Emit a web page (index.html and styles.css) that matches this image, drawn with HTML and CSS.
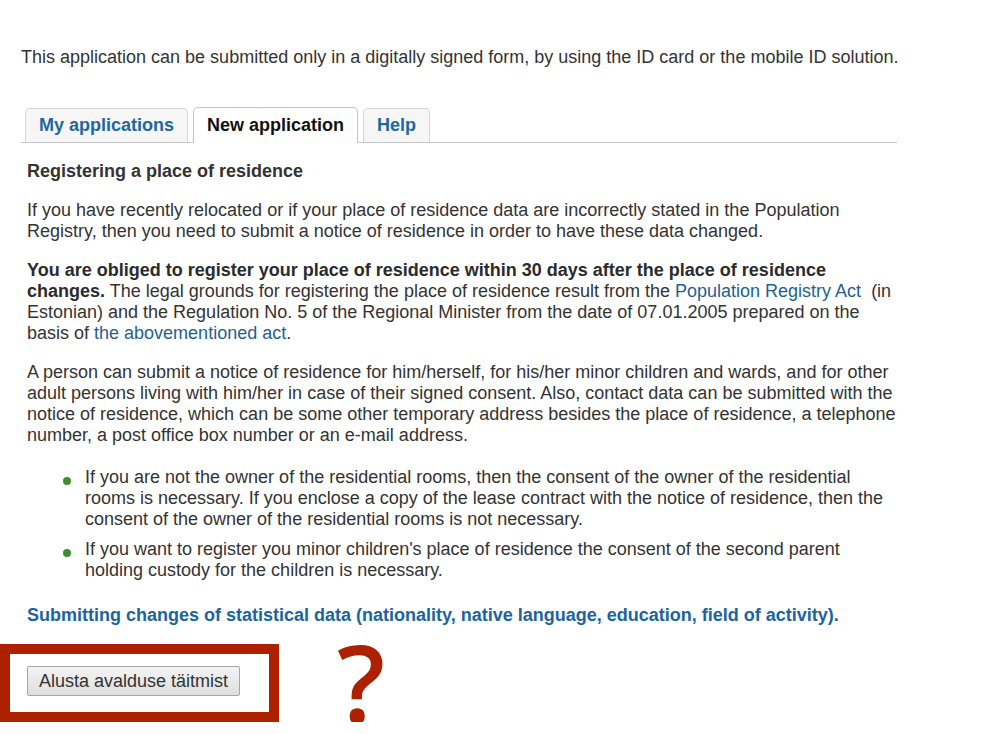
FILE: index.html
```html
<!DOCTYPE html>
<html lang="en">

<head>
    <meta charset="UTF-8">
    <meta name="viewport" content="width=device-width, initial-scale=1.0">
    <title>Place of residence</title>
    <link rel="stylesheet" href="styles.css">
</head>

<body>
    <div class="page">
        <p class="intro">This application can be submitted only in a digitally signed form, by using the ID card or the mobile ID solution.</p>

        <div class="tabs">
            <a class="tab" href="#">My applications</a>
            <a class="tab active" href="#">New application</a>
            <a class="tab" href="#">Help</a>
        </div>

        <div class="content">
            <h2>Registering a place of residence</h2>

            <p>If you have recently relocated or if your place of residence data are incorrectly stated in the Population Registry, then you need to submit a notice of residence in order to have these data changed.</p>

            <p><strong>You are obliged to register your place of residence within 30 days after the place of residence changes.</strong> The legal grounds for registering the place of residence result from the <a href="#">Population Registry Act</a>&nbsp; (in Estonian) and the Regulation No. 5 of the Regional Minister from the date of 07.01.2005 prepared on the basis of <a href="#">the abovementioned act</a>.</p>

            <p>A person can submit a notice of residence for him/herself, for his/her minor children and wards, and for other adult persons living with him/her in case of their signed consent. Also, contact data can be submitted with the notice of residence, which can be some other temporary address besides the place of residence, a telephone number, a post office box number or an e-mail address.</p>

            <ul class="notes">
                <li>If you are not the owner of the residential rooms, then the consent of the owner of the residential rooms is necessary. If you enclose a copy of the lease contract with the notice of residence, then the consent of the owner of the residential rooms is not necessary.</li>
                <li>If you want to register you minor children's place of residence the consent of the second parent holding custody for the children is necessary.</li>
            </ul>

            <p><a class="stat-link" href="#">Submitting changes of statistical data (nationality, native language, education, field of activity).</a></p>
        </div>
    </div>

    <div class="start-row">
        <div class="marked">
            <button class="start">Alusta avalduse täitmist</button>
        </div>
        <span class="question">?</span>
    </div>
</body>

</html>
```

FILE: styles.css
```css
* {
    box-sizing: border-box;
}

body {
    margin: 0;
    background: #fff;
    color: #333;
    font-family: "Liberation Sans", Arial, Helvetica, sans-serif;
    font-size: 18px;
    line-height: 21px;
}

a {
    color: #1f5f93;
    text-decoration: none;
}

.page {
    width: 897px;
    padding: 47px 0 0 21px;
}

.intro {
    margin: 0 0 39px 0;
    white-space: nowrap;
}

.tabs {
    display: flex;
    align-items: flex-end;
    gap: 5px;
    padding-left: 4px;
    border-bottom: 1px solid #c6c6c6;
}

.tab {
    display: block;
    height: 34px;
    padding: 6px 13px 0 13px;
    border: 1px solid #d6d6d6;
    border-bottom: none;
    border-radius: 5px 5px 0 0;
    background: #f6f6f6;
    color: #1d68a3;
    font-weight: bold;
}

.tab.active {
    height: 36px;
    margin-bottom: -1px;
    padding-top: 7px;
    border-color: #c6c6c6;
    background: #fff;
    color: #111;
}

.content {
    padding: 18px 0 0 6px;
}

.content h2 {
    margin: 0 0 18px 0;
    font-size: 18px;
    line-height: 21px;
}

.content p {
    margin: 0 0 18px 0;
}

.content strong {
    color: #2b2b2b;
}

.notes {
    list-style: none;
    margin: 21px 0 24px 0;
    padding-left: 58px;
}

.notes li {
    position: relative;
    margin-bottom: 9px;
}

.notes li::before {
    content: "";
    position: absolute;
    left: -22px;
    top: 10px;
    width: 8px;
    height: 8px;
    border-radius: 50%;
    background: #3b8f2c;
}

.stat-link {
    font-weight: bold;
    color: #1b64a0;
}

.start-row {
    display: flex;
    align-items: flex-start;
    margin-top: 3px;
}

.marked {
    width: 279px;
    padding: 12px 0 16px 17px;
    border: 10px solid #ad2000;
}

.start {
    height: 30px;
    padding: 0 11px;
    border: 1px solid #a6a6a6;
    border-radius: 2px;
    background: linear-gradient(#f4f4f4, #dedede);
    color: #333;
    font-family: "Liberation Sans", Arial, sans-serif;
    font-size: 18px;
    white-space: nowrap;
}

.question {
    margin: -2px 0 0 58px;
    color: #ad2000;
    font-family: "Open Sans", sans-serif;
    font-weight: 600;
    font-size: 106px;
    line-height: 80px;
}
```
